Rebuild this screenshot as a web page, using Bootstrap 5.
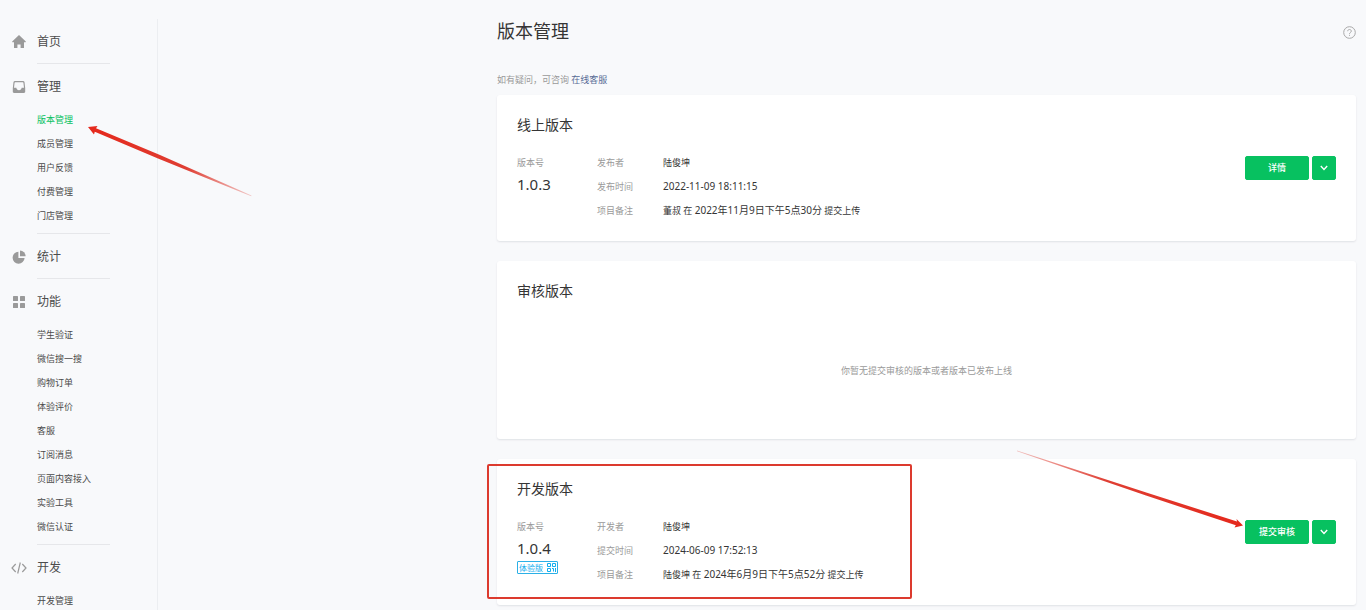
<!DOCTYPE html>
<html lang="zh-CN">
<head>
<meta charset="utf-8">
<meta name="viewport" content="width=device-width, initial-scale=1">
<title>版本管理</title>
<link href="https://cdn.jsdelivr.net/npm/bootstrap@5.3.0/dist/css/bootstrap.min.css" rel="stylesheet">
<style>
html { scrollbar-width: none; }
body { background: #f8f9fb; color: #353535; font-family: "Noto Sans", "Noto Sans CJK SC", sans-serif; font-size: 9px; line-height: 24px; }
a { text-decoration: none; }
.side { flex: 0 0 158px; margin-top: 19px; border-right: 1px solid #eceef1; }
.side-group { margin: 0 47px 0 37px; padding: 11px 0 9px; border-bottom: 1px solid #e6e7ea; }
.side-group:last-child { border-bottom: 0; }
.side-head { font-size: 12px; color: #4c4c4c; margin-left: -26px; gap: 10px; }
.side-head svg { width: 16px; height: 16px; flex: none; color: #9a9a9a; }
.side-list { margin: 9px 0 -4px; }
.side-list a { display: block; color: #4a4a4a; white-space: nowrap; }
.side-list a.active { color: #07c160; }
.content-col { max-width: 859px; margin: 0 10px 0 auto; }
.panels { gap: 20px; }
.page-title { font-size: 18px; line-height: 24px; font-weight: 400; margin: 19px 0 25px; }
.help-btn { color: #a8a8a8; line-height: 0; margin-top: 26px; }
.hint { color: #9a9a9a; margin-bottom: 3px; }
.hint a { color: #576b95; }
.panel { background: #fff; border-radius: 3px; box-shadow: 0 1px 2px #dfe1e5; padding: 18px 20px; }
.panel-title { font-size: 14px; line-height: 24px; font-weight: 400; margin-bottom: 14px; }
.panel-empty { min-height: 178px; }
.empty-note { color: #9a9a9a; padding-top: 42px; }
.ver-col { flex: 0 0 80px; }
.tag-label, .info th { color: #9a9a9a; font-weight: 400; }
.ver-num { font-size: 15px; line-height: 18px; }
.info th { width: 66px; }
.info th, .info td { padding: 0; }
.info time { font-size: 10px; line-height: 16px; }
.trial-tag { height: 13px; margin-top: 4px; padding: 0 1px; gap: 4px; border: 1px solid #2bb0e6; border-radius: 1px; color: #10aeef; line-height: 11px; font-size: 8px; }
.btn-green { --bs-btn-color: #fff; --bs-btn-bg: #07c160; --bs-btn-border-color: #07c160; --bs-btn-hover-color: #fff; --bs-btn-hover-bg: #06ad56; --bs-btn-hover-border-color: #06ad56; --bs-btn-active-bg: #06ad56; --bs-btn-active-color: #fff; height: 24px; border-radius: 2px; padding: 0; font-size: 9px; line-height: 22px; font-weight: 500; }
.btn-main { width: 64px; }
.btn-more { width: 24px; line-height: 0; }
.actions { gap: 3px; margin-top: 5px; }
.mark-box { left: -10px; right: 444px; top: 5px; bottom: 6px; border: 2px solid #dc3a2e; border-radius: 2px; pointer-events: none; }
.arrow-menu { left: 51px; top: 17px; pointer-events: none; z-index: 2; }
.arrow-submit { right: 92px; top: -70px; pointer-events: none; z-index: 2; }
</style>
</head>
<body>
<div class="d-flex min-vh-100">
  <nav class="side" aria-label="主菜单">
    <div class="side-group">
      <a href="#" class="side-head d-flex align-items-center">
        <svg viewBox="0 0 16 16" fill="currentColor"><path d="M8 1 1.200 7.600c-.2.3-.1.6.3.6H3V14h3.400v-3.600h3.200V14H13V8.200h1.500c.4 0 .5-.3.300-.6z"/></svg>首页</a>
    </div>
    <div class="side-group">
      <a href="#" class="side-head d-flex align-items-center">
        <svg viewBox="0 0 16 16"><path fill="currentColor" fill-rule="evenodd" d="M4 2h8c.8 0 1.300.4 1.500 1.100L14.200 9v3.800c0 .7-.5 1.200-1.200 1.200H3c-.7 0-1.200-.5-1.200-1.200V9l.7-5.900C2.700 2.400 3.200 2 4 2zm.2 1.200c-.3 0-.5.200-.6.5L3 8.800h2.300c.3 1.500 1.200 2.400 2.700 2.400s2.400-.9 2.700-2.400H13l-.6-5.100c-.1-.3-.3-.5-.6-.5z"/></svg>管理</a>
      <ul class="side-list list-unstyled">
        <li class="position-relative"><a href="#" class="active" aria-current="page">版本管理</a>
          <svg class="arrow-menu position-absolute" width="165" height="74" viewBox="0 0 165 74" aria-hidden="true">
            <defs><linearGradient id="fadeA"><stop offset="0" stop-color="#e5281b"/><stop offset=".6" stop-color="#df3e33"/><stop offset="1" stop-color="#df3e33" stop-opacity=".25"/></linearGradient></defs>
            <path fill="url(#fadeA)" d="M0 2 9.500 1 8 3.300 72 30 163.500 70.500 163.200 71.300 70 33.500 6.800 6.800 6 9.500z"/>
          </svg></li>
        <li><a href="#">成员管理</a></li>
        <li><a href="#">用户反馈</a></li>
        <li><a href="#">付费管理</a></li>
        <li><a href="#">门店管理</a></li>
      </ul>
    </div>
    <div class="side-group">
      <a href="#" class="side-head d-flex align-items-center">
        <svg viewBox="0 0 16 16" fill="currentColor"><path d="M7.400 2.700V9h6.200A6 6 0 1 1 7.400 2.700z"/><path d="M9 1.500A5.700 5.700 0 0 1 14.600 7.300H9z"/></svg>统计</a>
    </div>
    <div class="side-group">
      <a href="#" class="side-head d-flex align-items-center">
        <svg viewBox="0 0 16 16" fill="currentColor"><rect x="2" y="2" width="5" height="5" rx=".6"/><rect x="9" y="2" width="5" height="5" rx=".6"/><rect x="2" y="9" width="5" height="5" rx=".6"/><rect x="9" y="9" width="5" height="5" rx=".6"/></svg>功能</a>
      <ul class="side-list list-unstyled">
        <li><a href="#">学生验证</a></li>
        <li><a href="#">微信搜一搜</a></li>
        <li><a href="#">购物订单</a></li>
        <li><a href="#">体验评价</a></li>
        <li><a href="#">客服</a></li>
        <li><a href="#">订阅消息</a></li>
        <li><a href="#">页面内容接入</a></li>
        <li><a href="#">实验工具</a></li>
        <li><a href="#">微信认证</a></li>
      </ul>
    </div>
    <div class="side-group">
      <a href="#" class="side-head d-flex align-items-center">
        <svg viewBox="0 0 16 16" fill="none" stroke="currentColor" stroke-width="1.200"><path d="M4.700 4 1 8l3.700 4M11.300 4 15 8l-3.700 4M9.300 2.500 6.700 13.500"/></svg>开发</a>
      <ul class="side-list list-unstyled">
        <li><a href="#">开发管理</a></li>
      </ul>
    </div>
  </nav>

  <main class="flex-grow-1">
    <div class="content-col">
      <div class="d-flex justify-content-between align-items-start">
        <h1 class="page-title">版本管理</h1>
        <button type="button" class="help-btn btn p-0 border-0" aria-label="帮助">
          <svg width="13" height="13" viewBox="0 0 13 13" fill="none" stroke="currentColor"><circle cx="6.500" cy="6.500" r="5.800"/><path d="M4.700 5.200c0-2.300 3.600-2.300 3.600 0 0 1.300-1.800 1.300-1.800 2.700M6.500 8.800v1"/></svg>
        </button>
      </div>
      <p class="hint">如有疑问，可咨询 <a href="#">在线客服</a></p>

      <div class="panels d-flex flex-column">
        <section class="panel">
          <h2 class="panel-title">线上版本</h2>
          <div class="d-flex align-items-start">
            <div class="ver-col"><div class="tag-label">版本号</div><div class="ver-num">1.0.3</div></div>
            <table class="info">
              <tr><th scope="row">发布者</th><td>陆俊坤</td></tr>
              <tr><th scope="row">发布时间</th><td><time>2022-11-09 18:11:15</time></td></tr>
              <tr><th scope="row">项目备注</th><td>董叔 在 <time>2022年11月9日下午5点30分</time> 提交上传</td></tr>
            </table>
            <div class="actions d-flex ms-auto">
              <button type="button" class="btn btn-green btn-main">详情</button>
              <button type="button" class="btn btn-green btn-more" aria-label="更多操作"><svg width="8" height="6" viewBox="0 0 8 6" fill="none" stroke="#fff" stroke-width="1.400"><path d="M.8 1 4 4.400 7.200 1"/></svg></button>
            </div>
          </div>
        </section>

        <section class="panel panel-empty">
          <h2 class="panel-title">审核版本</h2>
          <p class="empty-note text-center mb-0">你暂无提交审核的版本或者版本已发布上线</p>
        </section>

        <section class="panel position-relative">
          <h2 class="panel-title">开发版本</h2>
          <div class="d-flex align-items-start">
            <div class="ver-col"><div class="tag-label">版本号</div><div class="ver-num">1.0.4</div>
              <a href="#" class="trial-tag d-inline-flex align-items-center align-top">体验版
                <svg width="9" height="9" viewBox="0 0 9 9" fill="none" stroke="currentColor"><path d="M.5.5h3v3h-3zM5.500.5h3v3h-3zM.5 5.500h3v3h-3zM5 5.500h1.500v3M8.500 5v4"/></svg></a>
            </div>
            <table class="info">
              <tr><th scope="row">开发者</th><td>陆俊坤</td></tr>
              <tr><th scope="row">提交时间</th><td><time>2024-06-09 17:52:13</time></td></tr>
              <tr><th scope="row">项目备注</th><td>陆俊坤 在 <time>2024年6月9日下午5点52分</time> 提交上传</td></tr>
            </table>
            <div class="actions d-flex ms-auto position-relative">
              <button type="button" class="btn btn-green btn-main">提交审核</button>
              <button type="button" class="btn btn-green btn-more" aria-label="更多操作"><svg width="8" height="6" viewBox="0 0 8 6" fill="none" stroke="#fff" stroke-width="1.400"><path d="M.8 1 4 4.400 7.200 1"/></svg></button>
              <svg class="arrow-submit position-absolute" width="227" height="80" viewBox="0 0 227 80" aria-hidden="true">
                <defs><linearGradient id="fadeB"><stop offset="0" stop-color="#df3e33" stop-opacity=".3"/><stop offset=".4" stop-color="#df3e33"/><stop offset="1" stop-color="#e5281b"/></linearGradient></defs>
                <path fill="url(#fadeB)" d="M0 .5 130 42.800 220 71.500 219.500 69 226 75.500 217.500 77.500 218.800 75.300 129 45.500 0 1.300z"/>
              </svg>
            </div>
          </div>
          <div class="mark-box position-absolute"></div>
        </section>
      </div>
    </div>
  </main>
</div>
<script src="https://cdn.jsdelivr.net/npm/bootstrap@5.3.0/dist/js/bootstrap.bundle.min.js"></script>
</body>
</html>
